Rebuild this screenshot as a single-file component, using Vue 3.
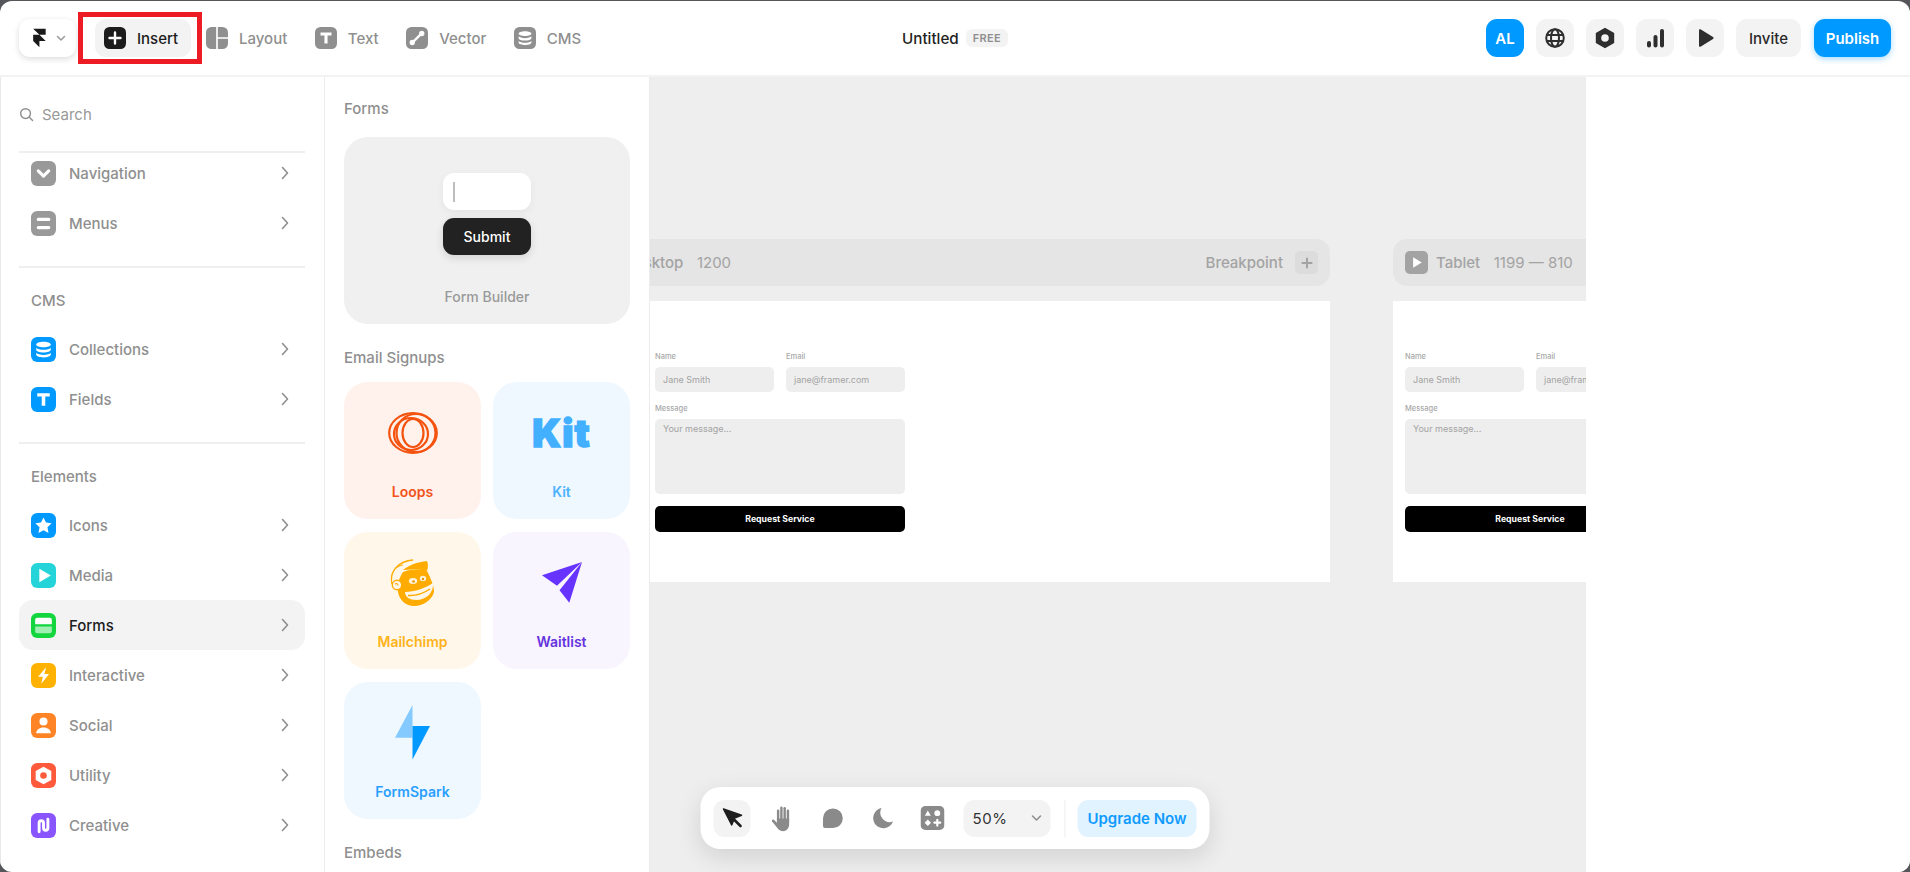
<script setup>
const g = {
  chevron: [{ d: 'M7 9.5l5 5 5-5', s: 3 }],
  menus: [{ d: 'M7 6.5h10a1.5 1.5 0 010 3.2H7a1.5 1.5 0 010-3.2zM7 14.3h10a1.5 1.5 0 010 3.2H7a1.5 1.5 0 010-3.2z' }],
  db: [
    { d: 'M12 4.5c3.9 0 7 1.1 7 2.7s-3.1 2.7-7 2.7-7-1.1-7-2.7 3.1-2.7 7-2.7z' },
    { d: 'M5 10.2c1 1.3 4 2 7 2s6-.7 7-2v2c0 1.4-3.1 2.6-7 2.6s-7-1.2-7-2.6z' },
    { d: 'M5 15.2c1 1.3 4 2 7 2s6-.7 7-2v1.6c0 1.6-3.1 2.8-7 2.8s-7-1.2-7-2.8z' }
  ],
  t: [{ d: 'M6 6h12v3.2h-4.3V18h-3.4V9.2H6z' }],
  star: [{ d: 'M12 4.2l2.4 5 5.4.7-4 3.8 1 5.4-4.8-2.6-4.8 2.6 1-5.4-4-3.8 5.4-.7z' }],
  play: [{ d: 'M8 5.5l11 6.5-11 6.5z' }],
  forms: [
    { d: 'M6 4.5h12a2 2 0 012 2v4.3H4V6.5a2 2 0 012-2z' },
    { d: 'M4 13h16v4.5a2 2 0 01-2 2H6a2 2 0 01-2-2z', o: 0.6 }
  ],
  bolt: [{ d: 'M14.5 4L6.8 13.2h4.6L9.8 20l7.6-9.4h-4.6z' }],
  person: [
    { d: 'M12 4.2a3.9 3.9 0 110 7.8 3.9 3.9 0 010-7.8z' },
    { d: 'M5 19.5c0-3.2 3-5.500 7-5.500s7 2.300 7 5.500z' }
  ],
  hex: [{ d: 'M12 3.5l7.5 4.2v8.6L12 20.5l-7.5-4.2V7.7zM12 8.8a3.2 3.2 0 100 6.4 3.2 3.2 0 000-6.4z', e: true }],
  creative: [{ d: 'M7.800 18V9.500a2.100 2.100 0 014.200 0v5a2.100 2.100 0 004.200 0V6', s: 2.8 }],
  layout: [{ d: 'M11.1 0h1.8v24h-1.8zM12.9 11.1H24v1.8H12.9z' }],
  vector: [
    { d: 'M7.5 16.5L16.5 7.5', s: 2.6 },
    { d: 'M6.8 14a2.9 2.9 0 110 5.8 2.9 2.9 0 010-5.8zM17.2 4.2a2.9 2.9 0 110 5.8 2.9 2.9 0 010-5.8z' }
  ]
}

const gray = '#999999'
const topNav = [
  { label: 'Layout', glyph: g.layout },
  { label: 'Text', glyph: g.t },
  { label: 'Vector', glyph: g.vector },
  { label: 'CMS', glyph: g.db }
]
const groups = [
  { rows: [
    { label: 'Navigation', color: gray, glyph: g.chevron },
    { label: 'Menus', color: gray, glyph: g.menus }
  ] },
  { title: 'CMS', rows: [
    { label: 'Collections', color: '#0099ff', glyph: g.db },
    { label: 'Fields', color: '#0099ff', glyph: g.t }
  ] },
  { title: 'Elements', rows: [
    { label: 'Icons', color: '#0099ff', glyph: g.star },
    { label: 'Media', color: '#25d4d8', glyph: g.play },
    { label: 'Forms', color: '#13d63f', glyph: g.forms, active: true },
    { label: 'Interactive', color: '#ffb300', glyph: g.bolt },
    { label: 'Social', color: '#ff8426', glyph: g.person },
    { label: 'Utility', color: '#ff5a3c', glyph: g.hex },
    { label: 'Creative', color: '#8855ff', glyph: g.creative }
  ] }
]
const frames = [
  { id: 'desktop', name: 'Desktop', size: '1200', breakpoint: true },
  { id: 'tablet', name: 'Tablet', size: '1199 — 810', breakpoint: false }
]
</script>

<template>
  <div class="window">
    <header class="topbar">
      <div class="top-left">
        <button class="logo-btn">
          <svg class="logo" viewBox="0 0 24 24"><path d="M5 1h15v7h-7.5zM5 8h7.5l7.5 7.5h-7.5V23L5 15.5z" fill="#1a1a1a" /></svg>
          <svg class="mini-chev" viewBox="0 0 12 12"><path d="M2.5 4.5L6 8l3.5-3.500" fill="none" stroke="#999" stroke-width="1.5" stroke-linecap="round" stroke-linejoin="round" /></svg>
        </button>
        <button class="insert">
          <svg class="nav-tile" viewBox="0 0 24 24">
            <rect width="24" height="24" rx="6" fill="#1c1c1c" />
            <path d="M12 6v12M6 12h12" stroke="#fff" stroke-width="2.6" stroke-linecap="round" />
          </svg>
          <span>Insert</span>
        </button>
        <nav class="top-nav">
          <div v-for="n in topNav" :key="n.label" class="top-nav-item">
            <svg class="nav-tile" viewBox="0 0 24 24">
              <rect width="24" height="24" rx="6" fill="#8f8f8f" />
              <path v-for="(p, i) in n.glyph" :key="i" :d="p.d" :fill="p.s ? 'none' : '#fff'" :stroke="p.s ? '#fff' : 'none'" :stroke-width="p.s || 0" stroke-linecap="round" stroke-linejoin="round" />
            </svg>
            <span>{{ n.label }}</span>
          </div>
        </nav>
      </div>
      <div class="title">
        <span class="title-name">Untitled</span>
        <span class="free">FREE</span>
      </div>
      <div class="top-right">
        <button class="square blue">AL</button>
        <button class="square">
          <svg viewBox="0 0 24 24" class="sq-icon" fill="none" stroke="#2e2e2e" stroke-width="2">
            <circle cx="12" cy="12" r="8.800" />
            <ellipse cx="12" cy="12" rx="4" ry="8.800" />
            <path d="M3.500 9h17M3.500 15h17" />
          </svg>
        </button>
        <button class="square">
          <svg viewBox="0 0 24 24" class="sq-icon"><path d="M12 1.800l9.200 5.200v10L12 22.200 2.800 17V7zM12 8.200a3.800 3.800 0 100 7.600 3.800 3.800 0 000-7.600z" fill="#2e2e2e" fill-rule="evenodd" /></svg>
        </button>
        <button class="square">
          <svg viewBox="0 0 24 24" class="sq-icon"><rect x="4" y="15" width="4" height="6.500" rx="2" fill="#2e2e2e" /><rect x="10.500" y="9" width="4" height="12.500" rx="2" fill="#2e2e2e" /><rect x="17" y="3" width="4" height="18.500" rx="2" fill="#2e2e2e" /></svg>
        </button>
        <button class="square">
          <svg viewBox="0 0 24 24" class="sq-icon"><path d="M6 4.200a1 1 0 011.500-.9l12.500 7.800a1 1 0 010 1.800L7.500 20.700a1 1 0 01-1.500-.9z" fill="#2e2e2e" /></svg>
        </button>
        <button class="text-btn invite">Invite</button>
        <button class="text-btn publish">Publish</button>
      </div>
      <div class="highlight"></div>
    </header>

    <main class="main">
      <aside class="sidebar">
        <div class="search">
          <svg viewBox="0 0 16 16" class="search-icon" fill="none" stroke="#8f8f8f" stroke-width="1.5" stroke-linecap="round"><circle cx="7" cy="7" r="5.200" /><path d="M11 11l3.500 3.500" /></svg>
          <span>Search</span>
        </div>
        <section v-for="(grp, gi) in groups" :key="gi" class="group" :class="{ first: gi === 0 }">
          <h3 v-if="grp.title" class="group-title">{{ grp.title }}</h3>
          <div v-for="r in grp.rows" :key="r.label" class="row" :class="{ active: r.active }">
            <svg class="tile" viewBox="0 0 24 24">
              <rect width="24" height="24" rx="6" :fill="r.color" />
              <path v-for="(p, i) in r.glyph" :key="i" :d="p.d" :fill="p.s ? 'none' : '#fff'" :fill-opacity="p.o || 1" :fill-rule="p.e ? 'evenodd' : 'nonzero'" :stroke="p.s ? '#fff' : 'none'" :stroke-width="p.s || 0" stroke-linecap="round" stroke-linejoin="round" />
            </svg>
            <span class="row-label">{{ r.label }}</span>
            <svg class="chev" viewBox="0 0 8 14"><path d="M1.500 1.500L6.500 7l-5 5.500" fill="none" stroke="#8f8f8f" stroke-width="1.600" stroke-linecap="round" stroke-linejoin="round" /></svg>
          </div>
        </section>
      </aside>

      <aside class="panel">
        <h3 class="panel-title forms-title">Forms</h3>
        <div class="builder">
          <div class="demo-input"><i class="caret"></i></div>
          <div class="demo-submit">Submit</div>
          <div class="builder-label">Form Builder</div>
        </div>
        <h3 class="panel-title email-title">Email Signups</h3>
        <div class="cards">
          <div class="card loops">
            <div class="card-art">
              <svg width="50" height="42" viewBox="0 0 50 42" fill="none" stroke="#f4530f" stroke-width="2.200">
                <ellipse cx="25" cy="21" rx="23.800" ry="19.800" />
                <ellipse cx="28" cy="21" rx="19.500" ry="19" />
                <ellipse cx="23" cy="22" rx="17" ry="16" />
                <ellipse cx="25" cy="21" rx="10.500" ry="14" />
              </svg>
            </div>
            <span>Loops</span>
          </div>
          <div class="card kit">
            <div class="card-art"><span class="kit-mark">Kit</span></div>
            <span>Kit</span>
          </div>
          <div class="card mailchimp">
            <div class="card-art">
              <svg width="45" height="48" viewBox="0 0 45 48">
                <path d="M2 25C-1 12 9 2 23 1" fill="none" stroke="#ffab00" stroke-width="1.300" />
                <path d="M13 11C19 6 27 3 37 2c1.500 3 1 7 0 10-8-2-16-1.500-24-1z" fill="#ffab00" />
                <path d="M13 13c9-3 18-3 24-1 3 6 7 14 7 21-2 8-11 14-20 14-9 0-15-7-16-14-1-7 1-14 5-20z" fill="#ffab00" />
                <path d="M6 9c3-2 6-3 7-3" stroke="#ffab00" stroke-width="1" fill="none" />
                <circle cx="7" cy="26" r="4.700" fill="#fff8ea" stroke="#ffab00" stroke-width="1.400" />
                <path d="M5 25c1.500-1 3 0 3 1.500" stroke="#ffab00" stroke-width="1.100" fill="none" />
                <path d="M15 33c9 0 21-4 28-9 1 9-6 17-17 17-6 0-11-3-11-8z" fill="#fff8ea" />
                <path d="M18 36.500c7 .5 16-2.500 22-6.500" stroke="#ffab00" stroke-width="1.500" fill="none" />
                <ellipse cx="23" cy="22" rx="4.200" ry="3" fill="#fff3d6" />
                <ellipse cx="33" cy="19.500" rx="3.200" ry="2.800" fill="#fff3d6" />
                <circle cx="23.500" cy="22.500" r="1.300" fill="#e89400" />
                <circle cx="33" cy="20" r="1.200" fill="#e89400" />
              </svg>
            </div>
            <span>Mailchimp</span>
          </div>
          <div class="card waitlist">
            <div class="card-art">
              <svg width="40" height="41" viewBox="0 0 40 41">
                <path d="M40 0L0 13.300l15 10.500z" fill="#6633ff" />
                <path d="M40 0L27.300 40.700 17.500 28.300z" fill="#6633ff" />
              </svg>
            </div>
            <span>Waitlist</span>
          </div>
          <div class="card formspark">
            <div class="card-art">
              <svg width="35" height="55" viewBox="0 0 35 55">
                <path d="M17.500 0v32.700H0z" fill="#85caff" />
                <path d="M17.500 21H35L17.500 54.500z" fill="#0099ff" />
              </svg>
            </div>
            <span>FormSpark</span>
          </div>
        </div>
        <h3 class="panel-title embeds-title">Embeds</h3>
      </aside>

      <section class="canvas">
        <article v-for="f in frames" :key="f.id" class="frame" :class="f.id">
          <div class="frame-head">
            <svg class="frame-tile" viewBox="0 0 24 24">
              <rect width="24" height="24" rx="5" fill="#a3a3a3" />
              <path d="M8.500 6.500l9 5.500-9 5.500z" fill="#fff" />
            </svg>
            <span class="frame-name">{{ f.name }}</span>
            <span class="frame-size">{{ f.size }}</span>
            <template v-if="f.breakpoint">
              <span class="frame-bp">Breakpoint</span>
              <span class="frame-plus">
                <svg viewBox="0 0 24 24" width="16" height="16"><path d="M12 4v16M4 12h16" stroke="#a3a3a3" stroke-width="3" /></svg>
              </span>
            </template>
          </div>
          <div class="frame-body">
            <form class="contact" @submit.prevent>
              <div class="field"><label>Name</label><div class="inp">Jane Smith</div></div>
              <div class="field"><label>Email</label><div class="inp">jane@framer.com</div></div>
              <div class="field wide"><label>Message</label><div class="inp area">Your message...</div></div>
              <div class="send wide">Request Service</div>
            </form>
          </div>
        </article>
      </section>

      <aside class="right"></aside>

      <div class="toolbar">
        <button class="tool on">
          <svg viewBox="0 0 24 24" width="24" height="24"><path d="M3 3l18 6.200-7 2.800-2.800 7z" fill="#1e1e1e" stroke="#1e1e1e" stroke-width="1.500" stroke-linejoin="round" /><path d="M13 13l7 7" stroke="#1e1e1e" stroke-width="2.600" stroke-linecap="round" /></svg>
        </button>
        <button class="tool">
          <svg viewBox="0 0 24 24" width="29" height="29" fill="#8a8a8a">
            <rect x="7.800" y="4.500" width="2" height="10" rx="1" />
            <rect x="10.500" y="2" width="2" height="12" rx="1" />
            <rect x="13.200" y="2.500" width="2" height="12" rx="1" />
            <rect x="15.900" y="4.500" width="2" height="11" rx="1" />
            <path d="M7.800 12h10.100v4.500c0 3.500-2.200 6-5.200 6-2.500 0-3.800-1.200-5-3.200L3.800 14.500c-.7-1.100.8-2.200 1.800-1.200l2.200 2.200z" />
          </svg>
        </button>
        <button class="tool">
          <svg viewBox="0 0 24 24" width="24" height="24"><path d="M12.500 2.500a9.800 9.800 0 110 19.600H4.500a2 2 0 01-2-2v-7.800a9.800 9.800 0 0110-9.800z" fill="#8a8a8a" /></svg>
        </button>
        <button class="tool">
          <svg viewBox="0 0 24 24" width="24" height="24"><path d="M11 2a10.200 10.200 0 1011.500 13.500A9.500 9.500 0 0111 2z" fill="#8a8a8a" /></svg>
        </button>
        <button class="tool">
          <svg viewBox="0 0 24 24" width="24" height="24">
            <rect width="24" height="24" rx="5" fill="#8a8a8a" />
            <path d="M7.300 4.500l3 5.200h-6z" fill="#fff" />
            <circle cx="16.800" cy="7.200" r="2.900" fill="#fff" />
            <path d="M7.300 13.500l3.200 3.200-3.200 3.200-3.200-3.200z" fill="#fff" />
            <path d="M16.800 13.800v5.800M13.900 16.700h5.800" stroke="#fff" stroke-width="2.200" stroke-linecap="round" />
          </svg>
        </button>
        <div class="zoom">
          <span>50%</span>
          <svg viewBox="0 0 12 12" width="12" height="12"><path d="M2 4l4 4 4-4" fill="none" stroke="#8f8f8f" stroke-width="1.600" stroke-linecap="round" stroke-linejoin="round" /></svg>
        </div>
        <i class="divider"></i>
        <button class="upgrade">Upgrade Now</button>
      </div>
    </main>
  </div>
</template>

<style>
html, body { margin: 0; background: #55565a; }
</style>

<style scoped>
* { box-sizing: border-box; }
button { border: 0; padding: 0; font: inherit; cursor: default; }
h3 { margin: 0; font-weight: 500; }

.window {
  width: 1910px;
  height: 872px;
  padding-top: 1px;
  background: #55565a;
  font-family: Inter, "Noto Sans", sans-serif;
  overflow: hidden;
  position: relative;
}

.topbar {
  position: relative;
  height: 76px;
  display: grid;
  grid-template-columns: 1fr auto 1fr;
  align-items: center;
  padding: 0 19px;
  background: #fff;
  border-bottom: 2px solid #f3f3f3;
  border-radius: 12px 12px 0 0;
}
.top-left { display: flex; align-items: center; }
.logo-btn {
  width: 57px;
  height: 38px;
  display: flex;
  align-items: center;
  justify-content: center;
  gap: 6px;
  background: #fff;
  border-radius: 11px;
  box-shadow: 0 2px 6px rgba(0, 0, 0, .14);
}
.logo { width: 20px; height: 20px; }
.mini-chev { width: 12px; height: 12px; }
.insert {
  margin-left: 19px;
  width: 96px;
  height: 38px;
  display: flex;
  align-items: center;
  gap: 11px;
  padding-left: 9px;
  background: #f3f3f3;
  border-radius: 11px;
  color: #1c1c1c;
  font-size: 15px;
  font-weight: 500;
}
.nav-tile { width: 22px; height: 22px; flex: none; }
.top-nav { display: flex; gap: 27.500px; margin-left: 15px; }
.top-nav-item {
  display: flex;
  align-items: center;
  gap: 11px;
  color: #8f8f8f;
  font-size: 15px;
  font-weight: 500;
}

.title { display: flex; align-items: center; gap: 7px; }
.title-name { font-size: 15.200px; font-weight: 500; color: #222; }
.free {
  height: 18px;
  padding: 0 7px;
  display: flex;
  align-items: center;
  background: #f3f3f3;
  border-radius: 6px;
  font-size: 11px;
  font-weight: 600;
  color: #8f8f8f;
  letter-spacing: .3px;
}

.top-right { display: flex; justify-content: flex-end; gap: 12px; }
.square {
  width: 38px;
  height: 38px;
  display: flex;
  align-items: center;
  justify-content: center;
  background: #f3f3f3;
  border-radius: 11px;
}
.square.blue { background: #0099ff; color: #fff; font-size: 15px; font-weight: 600; }
.sq-icon { width: 24px; height: 24px; }
.text-btn { height: 38px; border-radius: 11px; font-size: 15px; font-weight: 500; }
.invite { width: 65px; background: #f3f3f3; color: #2a2a2a; }
.publish {
  width: 77px;
  margin-left: 1px;
  background: #0099ff;
  color: #fff;
  font-weight: 600;
  box-shadow: 0 2px 6px rgba(0, 153, 255, .35);
}
.highlight {
  position: absolute;
  left: 78px;
  top: 11px;
  width: 124px;
  height: 52px;
  border: 5px solid #ed1c24;
  pointer-events: none;
}

.main {
  position: relative;
  height: 795px;
  display: flex;
  background: #fff;
  border-radius: 0 0 12px 12px;
  overflow: hidden;
}

.sidebar {
  width: 325px;
  flex: none;
  padding: 0 19px 0 18px;
  border-right: 1px solid #ececec;
  border-left: 1px solid #e8e8e8;
  overflow: hidden;
}
.search {
  height: 36px;
  margin-top: 19px;
  display: flex;
  align-items: center;
  gap: 8px;
  color: #999;
  font-size: 15px;
}
.search-icon { width: 15px; height: 15px; }
.group { border-top: 2px solid #efefef; padding-bottom: 18px; }
.group.first { margin-top: 19px; }
.group.first .row:first-child { margin-top: -5px; }
.group-title {
  padding: 23px 12px 13px;
  line-height: 20px;
  font-size: 15px;
  color: #8f8f8f;
}
.row {
  height: 50px;
  display: flex;
  align-items: center;
  gap: 13px;
  padding: 0 16px 0 12px;
  border-radius: 14px;
  color: #8f8f8f;
  font-size: 15px;
  font-weight: 500;
}
.row.active { background: #f3f3f3; color: #1c1c1c; }
.tile { width: 25px; height: 25px; flex: none; }
.row-label { flex: 1; }
.chev { width: 8px; height: 14px; }

.panel {
  width: 325px;
  flex: none;
  padding: 0 19px;
  border-right: 1px solid #ececec;
  overflow: hidden;
}
.panel-title { line-height: 20px; font-size: 15px; color: #8f8f8f; }
.forms-title { margin-top: 22px; }
.builder {
  margin-top: 18px;
  width: 286px;
  height: 187px;
  padding-top: 36px;
  display: flex;
  flex-direction: column;
  align-items: center;
  background: #f0f0f0;
  border-radius: 24px;
}
.demo-input {
  width: 88px;
  height: 37px;
  display: flex;
  align-items: center;
  padding-left: 10px;
  background: #fff;
  border-radius: 11px;
  box-shadow: 0 3px 8px rgba(0, 0, 0, .05);
}
.caret { width: 2px; height: 20px; background: #bdbdbd; }
.demo-submit {
  margin-top: 8px;
  width: 88px;
  height: 37px;
  display: flex;
  align-items: center;
  justify-content: center;
  background: #222;
  border-radius: 11px;
  color: #fff;
  font-size: 14px;
  font-weight: 500;
  box-shadow: 0 3px 8px rgba(0, 0, 0, .12);
}
.builder-label { margin-top: 33px; font-size: 14px; font-weight: 500; color: #999; }
.email-title { margin-top: 24px; }
.cards {
  margin-top: 14px;
  width: 286px;
  display: grid;
  grid-template-columns: 137px 137px;
  gap: 13px 12px;
}
.card {
  height: 137px;
  display: flex;
  flex-direction: column;
  align-items: center;
  border-radius: 24px;
  font-size: 14px;
  font-weight: 600;
}
.card-art { height: 101px; width: 100%; display: flex; align-items: center; justify-content: center; }
.loops { background: #fff1ec; color: #f2541b; }
.kit { background: #eff8ff; color: #4db3ff; }
.mailchimp { background: #fff8ea; color: #ffb31a; }
.waitlist { background: #f8f5ff; color: #6633dd; }
.formspark { background: #eff8ff; color: #2a9fff; }
.kit-mark {
  font-size: 38px;
  font-weight: 900;
  line-height: 1;
  color: #42b0ff;
  letter-spacing: 1px;
  -webkit-text-stroke: 1.400px #42b0ff;
}
.embeds-title { margin-top: 24px; }

.canvas {
  position: relative;
  width: 936px;
  flex: none;
  background: #eeeeee;
  overflow: hidden;
}
.frame { position: absolute; top: 162px; }
.frame.desktop { left: -69px; width: 749px; }
.frame.tablet { left: 743px; width: 400px; }
.frame-head {
  height: 47px;
  display: flex;
  align-items: center;
  padding: 0 12px;
  background: #e5e5e5;
  border-radius: 14px;
  color: #a3a3a3;
  font-size: 15px;
  font-weight: 500;
}
.frame-tile { width: 23px; height: 23px; margin-right: 8px; flex: none; }
.frame-size { margin-left: 13.500px; font-weight: 400; }
.frame-bp { margin-left: auto; }
.frame-plus {
  width: 23px;
  height: 23px;
  margin-left: 12px;
  display: flex;
  align-items: center;
  justify-content: center;
  background: #dcdcdc;
  border-radius: 5px;
}
.frame-body { height: 281px; margin-top: 15px; background: #fff; padding-top: 50px; }
.desktop .frame-body { padding-left: 74px; }
.tablet .frame-body { padding-left: 12px; }
.contact {
  width: 250px;
  display: grid;
  grid-template-columns: 119px 119px;
  gap: 11px 12px;
}
.field { display: flex; flex-direction: column; gap: 5px; }
.wide { grid-column: 1 / -1; }
.field label { height: 11px; line-height: 11px; font-size: 7.500px; font-weight: 500; color: #a8a8a8; }
.inp {
  height: 25px;
  padding: 0 8px;
  line-height: 25px;
  background: #eeeeee;
  border-radius: 5px;
  font-size: 9px;
  color: #a3a3a3;
}
.inp.area { height: 75px; line-height: 20px; }
.send {
  height: 26px;
  margin-top: 1px;
  display: flex;
  align-items: center;
  justify-content: center;
  background: #000;
  border-radius: 5px;
  color: #fff;
  font-size: 8.700px;
  font-weight: 700;
}

.right { flex: 1; background: #fff; }

.toolbar {
  position: absolute;
  left: 50%;
  top: 710px;
  transform: translateX(-50%);
  width: 509px;
  height: 62px;
  display: flex;
  align-items: center;
  gap: 13px;
  padding: 0 13px;
  background: #fff;
  border-radius: 20px;
  box-shadow: 0 8px 24px rgba(0, 0, 0, .12);
}
.tool {
  width: 37px;
  height: 37px;
  flex: none;
  display: flex;
  align-items: center;
  justify-content: center;
  background: transparent;
  border-radius: 11px;
}
.tool.on { background: #f3f3f3; }
.zoom {
  width: 87px;
  height: 37px;
  flex: none;
  display: flex;
  align-items: center;
  justify-content: space-between;
  padding: 0 8px 0 9px;
  background: #f3f3f3;
  border-radius: 11px;
  font-size: 15px;
  color: #333;
  letter-spacing: .6px;
}
.divider { width: 1px; height: 37px; background: #eeeeee; margin-left: 1px; margin-right: -1px; }
.upgrade {
  width: 119px;
  height: 37px;
  flex: none;
  background: #e0f3ff;
  border-radius: 11px;
  color: #0f9bff;
  font-size: 15px;
  font-weight: 600;
}
</style>
